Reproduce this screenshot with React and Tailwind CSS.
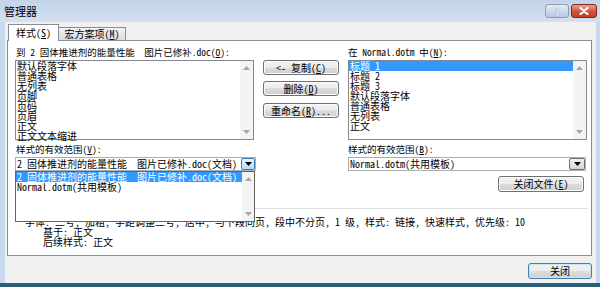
import React from "react";

const leftStyles = ["默认段落字体", "普通表格", "无列表", "页脚", "页码", "页眉", "正文", "正文文本缩进"];
const rightStyles = ["标题 1", "标题 2", "标题 3", "默认段落字体", "普通表格", "无列表", "正文"];

function Arrow({ up, color = "#a6a6a6" }) {
  return (
    <svg width="7" height="4" viewBox="0 0 7 4">
      <path d={up ? "M0 4 L3.5 0 L7 4 Z" : "M0 0 L7 0 L3.5 4 Z"} fill={color} />
    </svg>
  );
}

function ScrollTrack({ className = "" }) {
  return (
    <div className={`flex flex-col items-center justify-between bg-[#f3f3f3] py-[5px] ${className}`}>
      <Arrow up />
      <Arrow />
    </div>
  );
}

function WinButton({ className = "", children }) {
  return (
    <div
      className={`flex items-center justify-center rounded-[3px] border border-[#707070] bg-[linear-gradient(#f2f2f2,#ebebeb_50%,#dddddd_50%,#cfcfcf)] shadow-[inset_0_0_0_1px_#fcfcfc] text-[10px] leading-none whitespace-pre ${className}`}
    >
      {children}
    </div>
  );
}

function ListBox({ items, selected, className = "" }) {
  return (
    <div className={`flex border border-[#828790] bg-white ${className}`}>
      <div className="flex-1 text-[10px] leading-[10px]">
        {items.map((item, i) => (
          <div
            key={i}
            className={`whitespace-pre px-[1px] ${i === selected ? "bg-[#3399ff] text-white" : ""}`}
          >
            {item}
          </div>
        ))}
      </div>
      <ScrollTrack className="w-[13px]" />
    </div>
  );
}

export default function App() {
  return (
    <div className="w-[600px] h-[287px] overflow-hidden flex flex-col bg-[#c9d9ed] text-black font-['Noto_Sans_Mono_CJK_SC','Noto_Sans_CJK_SC',monospace]">
      {/* Title bar */}
      <div className="h-[22px] flex items-start bg-gradient-to-b from-[#c3d4ea] to-[#d3e0f0]">
        <div className="pl-[4px] pt-[5px] text-[11px] leading-[12px]">管理器</div>
        <div className="ml-auto mt-[4px] mr-[3px] flex gap-[2px]">
          <div className="w-[24px] h-[14px] rounded-[3px] border border-[#8d9cb4] bg-gradient-to-b from-[#e3ecf6] to-[#b9c9de] flex items-center justify-center text-[11px] font-bold leading-none text-[#eef3f9] [text-shadow:0_0_1px_#5a6c84]">
            ?
          </div>
          <div className="w-[26px] h-[14px] rounded-[3px] border border-[#7c2a1c] bg-gradient-to-b from-[#e8a493] via-[#d0583f] to-[#c43d24] flex items-center justify-center">
            <svg width="10" height="8" viewBox="0 0 10 8">
              <path d="M1.5 1 L8.5 7 M8.5 1 L1.5 7" stroke="#ffffff" strokeWidth="2.2" strokeLinecap="round" />
            </svg>
          </div>
        </div>
      </div>

      {/* Client */}
      <div className="flex-1 flex pl-[5px] pr-[4px]">
        <div className="flex-1 flex flex-col bg-[#f0f0f0] pl-[2px] pr-[4px] pt-[2px]">
          {/* Tabs */}
          <div className="h-[16px] flex items-end pl-[1px] text-[10px] leading-none">
            <div className="relative z-10 -mb-px h-[17px] w-[51px] flex items-center justify-center border border-b-0 border-[#898c95] bg-white whitespace-pre">
              样式(<u>S</u>)
            </div>
            <div className="h-[13px] w-[67px] flex items-center justify-center border border-l-0 border-b-0 border-[#898c95] bg-gradient-to-b from-[#f2f2f2] to-[#dcdcdc] whitespace-pre">
              宏方案项(<u>M</u>)
            </div>
          </div>

          {/* Panel */}
          <div className="h-[216px] flex flex-col border border-[#898c95] bg-white">
            <div className="flex pt-[4px] pl-[7px]">
              {/* Left column */}
              <div className="w-[241px] flex flex-col">
                <div className="pl-[1px] text-[9.5px] leading-[14px] whitespace-pre">
                  到 2 固体推进剂的能量性能  图片已修补.doc(<u>O</u>):
                </div>
                <ListBox items={leftStyles} className="mt-[1px] w-[239px] h-[80px]" />
                <div className="mt-[2px] pl-[1px] text-[9.5px] leading-[14px] whitespace-pre">
                  样式的有效范围(<u>V</u>):
                </div>
                <div className="relative mt-[1px] h-[14px] w-[241px] flex border border-[#abadb3] bg-white">
                  <div className="flex-1 pl-[1px] text-[10px] leading-[12px] whitespace-pre">
                    2 固体推进剂的能量性能  图片已修补.doc(文档)
                  </div>
                  <div className="w-[14px] h-full rounded-[2px] border border-[#3c7fb1] bg-gradient-to-b from-[#e5f4fc] to-[#b3dcf4] flex items-center justify-center">
                    <Arrow color="#000000" />
                  </div>
                  {/* Open drop-down */}
                  <div className="absolute left-[-1px] top-[13px] z-10 w-[240px] h-[51px] flex border border-[#646464] bg-white">
                    <div className="flex-1 text-[10px] leading-[10px]">
                      <div className="bg-[#3399ff] text-white whitespace-pre px-[1px]">
                        2 固体推进剂的能量性能  图片已修补.doc(文档)
                      </div>
                      <div className="whitespace-pre px-[1px]">Normal.dotm(共用模板)</div>
                    </div>
                    <ScrollTrack className="w-[12px]" />
                  </div>
                </div>
              </div>

              {/* Middle buttons */}
              <div className="ml-[7px] w-[76px] pt-[15px] flex flex-col">
                <WinButton className="h-[15px]">
                  {"<- 复制("}<u>C</u>)
                </WinButton>
                <WinButton className="mt-[6px] h-[15px]">
                  删除(<u>D</u>)
                </WinButton>
                <WinButton className="mt-[7px] h-[15px]">
                  重命名(<u>R</u>)...
                </WinButton>
              </div>

              {/* Right column */}
              <div className="ml-[9px] w-[239px] flex flex-col">
                <div className="text-[9.5px] leading-[14px] whitespace-pre">
                  在 Normal.dotm 中(<u>N</u>):
                </div>
                <ListBox items={rightStyles} selected={0} className="mt-[1px] w-[239px] h-[80px]" />
                <div className="mt-[2px] text-[9.5px] leading-[14px] whitespace-pre">
                  样式的有效范围(<u>B</u>):
                </div>
                <div className="mt-[1px] h-[14px] w-[238px] flex border border-[#abadb3] bg-white">
                  <div className="flex-1 pl-[1px] text-[10px] leading-[12px] whitespace-pre">
                    Normal.dotm(共用模板)
                  </div>
                  <div className="w-[16px] h-full rounded-[2px] border border-[#707070] bg-gradient-to-b from-[#f2f2f2] to-[#d4d4d4] flex items-center justify-center">
                    <Arrow color="#000000" />
                  </div>
                </div>
                <WinButton className="mt-[5px] ml-auto mr-[3px] w-[86px] h-[16px]">
                  关闭文件(<u>E</u>)
                </WinButton>
              </div>
            </div>

            {/* Description */}
            <div className="mt-[16px] ml-[7px] mr-[3px] h-px bg-[#dedede]" />
            <div className="mt-[8px] pl-[17px] text-[10px] leading-[10px] whitespace-pre">
              <div>字体: 二号, 加粗, 字距调整二号, 居中, 与下段同页, 段中不分页, 1 级, 样式: 链接, 快速样式, 优先级: 10</div>
              <div className="pl-[18px]">基于: 正文</div>
              <div className="pl-[18px]">后续样式: 正文</div>
            </div>
          </div>

          {/* Bottom buttons */}
          <div className="mt-[7px] flex justify-end">
            <div className="w-[64px] h-[16px] flex items-center justify-center rounded-[3px] border border-[#3c7fb1] bg-[linear-gradient(#f2f2f2,#ebebeb_50%,#dddddd_50%,#cfcfcf)] shadow-[inset_0_0_0_1px_#c6e6f8] text-[10px] leading-none">
              关闭
            </div>
          </div>
        </div>
      </div>
      <div className="h-[4px] bg-[#295f77]" />
    </div>
  );
}
